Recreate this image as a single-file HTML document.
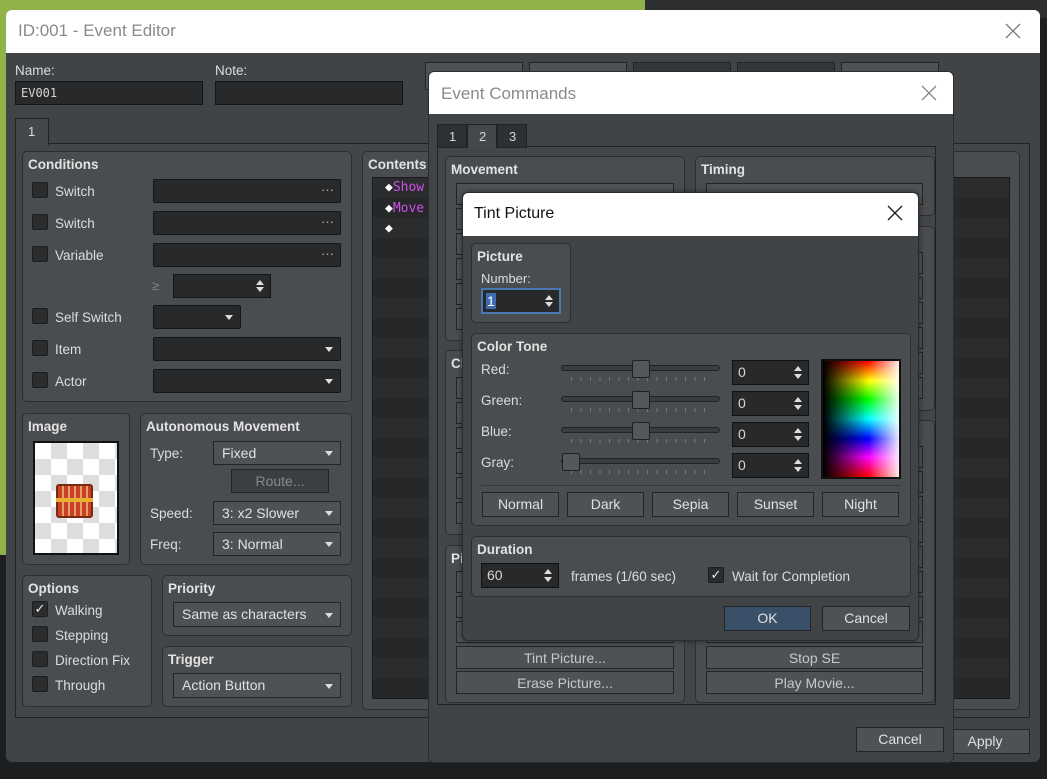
<!DOCTYPE html>
<html><head><meta charset="utf-8"><style>
*{box-sizing:border-box;margin:0;padding:0}
body{width:1047px;height:779px;overflow:hidden;position:relative;background:#1d1e1f;font-family:"Liberation Sans","DejaVu Sans",sans-serif;font-size:13px;color:#d6d6d6}
div,span,svg{position:absolute}
.grp{background:#4a4d50;border:1px solid #2c2e30;border-radius:5px}
.h{font-weight:bold;color:#e2e2e2;font-size:13.5px}
.in{background:#27292b;border:1px solid #141516}
.btn{background:#4f5255;border:1px solid #232425;text-align:center;color:#e0e0e0;line-height:22px;font-size:14px}
.cb{width:16px;height:16px;background:#2a2c2e;border:1px solid #1c1d1e;border-radius:2px}
.dd:after{content:"";position:absolute;right:7px;top:50%;margin-top:-2px;border:4px solid transparent;border-top:5px solid #ddd;border-bottom:0}
.sp:before{content:"";position:absolute;right:6px;top:5px;border:4px solid transparent;border-bottom:5px solid #ddd;border-top:0}
.sp:after{content:"";position:absolute;right:6px;bottom:5px;border:4px solid transparent;border-top:5px solid #ddd;border-bottom:0}
.lbl{font-size:13.5px;color:#dcdcdc}
.title{background:#fff;color:#8a8a8a;font-size:17px}
.trk{height:6px;background:#3a3d40;border:1px solid #222;border-radius:3px}
.thumb{width:18px;height:18px;background:#55585b;border:1px solid #1e1f20;border-radius:2px}
.ticks{height:4px;background:repeating-linear-gradient(90deg,#777 0 1px,transparent 1px 9.5px)}
</style></head><body>
<!-- backdrop -->
<div style="left:0;top:0;width:645px;height:18px;background:#8fb24a"></div>
<div style="left:0;top:0;width:8px;height:555px;background:#8fb24a"></div>
<div style="left:645px;top:0;width:402px;height:18px;background:#2c2e30"></div>

<!-- Event Editor -->
<div style="left:6px;top:10px;width:1034px;height:752px;background:#414447;border-radius:6px;overflow:hidden">
  <div class="title" style="left:0;top:0;width:1034px;height:43px;padding:11px 12px;color:#8a8a8a">ID:001 - Event Editor</div>
  <svg style="left:999px;top:13px" width="16" height="16"><path d="M1 1L15 15M15 1L1 15" stroke="#777" stroke-width="1.3"/></svg>
</div>
<div class="lbl" style="left:15px;top:63px">Name:</div>
<div class="lbl" style="left:215px;top:63px">Note:</div>
<div class="in" style="left:15px;top:81px;width:188px;height:24px;padding:4px 5px;font-family:'DejaVu Sans Mono',monospace;font-size:12px">EV001</div>
<div class="in" style="left:215px;top:81px;width:188px;height:24px"></div>
<div class="btn" style="left:425px;top:62px;width:98px;height:28px"></div>
<div class="btn" style="left:529px;top:62px;width:98px;height:28px"></div>
<div class="btn" style="left:633px;top:62px;width:98px;height:28px;background:#34373a"></div>
<div class="btn" style="left:737px;top:62px;width:98px;height:28px;background:#34373a"></div>
<div class="btn" style="left:841px;top:62px;width:98px;height:28px"></div>
<div style="left:15px;top:143px;width:1015px;height:575px;border:1px solid #222;background:#434649"></div>
<div style="left:15px;top:118px;width:34px;height:27px;background:#45484b;border:1px solid #222;border-bottom:none;color:#ddd;padding:5px 12px">1</div>

<!-- Conditions -->
<div class="grp" style="left:22px;top:151px;width:330px;height:251px"></div>
<div class="h" style="left:28px;top:157px">Conditions</div>
<div class="cb" style="left:32px;top:182px"></div><div class="lbl" style="left:55px;top:184px">Switch</div>
<div class="in" style="left:153px;top:179px;width:188px;height:24px;border-radius:2px"><span style="right:6px;top:2px;color:#bbb">···</span></div>
<div class="cb" style="left:32px;top:214px"></div><div class="lbl" style="left:55px;top:216px">Switch</div>
<div class="in" style="left:153px;top:211px;width:188px;height:24px;border-radius:2px"><span style="right:6px;top:2px;color:#bbb">···</span></div>
<div class="cb" style="left:32px;top:246px"></div><div class="lbl" style="left:55px;top:248px">Variable</div>
<div class="in" style="left:153px;top:243px;width:188px;height:24px;border-radius:2px"><span style="right:6px;top:2px;color:#bbb">···</span></div>
<div style="left:152px;top:278px;color:#888">≥</div>
<div class="in sp" style="left:173px;top:274px;width:98px;height:24px"></div>
<div class="cb" style="left:32px;top:308px"></div><div class="lbl" style="left:55px;top:310px">Self Switch</div>
<div class="in dd" style="left:153px;top:305px;width:88px;height:24px;border-radius:2px"></div>
<div class="cb" style="left:32px;top:340px"></div><div class="lbl" style="left:55px;top:342px">Item</div>
<div class="in dd" style="left:153px;top:337px;width:188px;height:24px;border-radius:2px"></div>
<div class="cb" style="left:32px;top:372px"></div><div class="lbl" style="left:55px;top:374px">Actor</div>
<div class="in dd" style="left:153px;top:369px;width:188px;height:24px;border-radius:2px"></div>

<!-- Image -->
<div class="grp" style="left:22px;top:413px;width:108px;height:152px"></div>
<div class="h" style="left:28px;top:419px">Image</div>
<div style="left:33px;top:441px;width:86px;height:114px;border:2px solid #111;background-color:#fff;background-image:linear-gradient(45deg,#ddd 25%,transparent 25%,transparent 75%,#ddd 75%),linear-gradient(45deg,#ddd 25%,transparent 25%,transparent 75%,#ddd 75%);background-size:32px 32px;background-position:0 0,16px 16px"></div>
<div style="left:56px;top:484px;width:37px;height:34px;background:repeating-linear-gradient(90deg,#c8402a 0 4px,#e8a060 4px 6px);border:2px solid #7a2a10;border-radius:3px"></div>
<div style="left:56px;top:498px;width:37px;height:4px;background:#e8b030"></div>

<!-- Autonomous -->
<div class="grp" style="left:140px;top:413px;width:212px;height:152px"></div>
<div class="h" style="left:146px;top:419px">Autonomous Movement</div>
<div class="lbl" style="left:150px;top:446px">Type:</div>
<div class="btn dd" style="left:213px;top:441px;width:128px;height:24px;text-align:left;padding-left:8px;line-height:22px">Fixed</div>
<div class="btn" style="left:231px;top:469px;width:98px;height:24px;color:#888;background:#3c3f42">Route...</div>
<div class="lbl" style="left:150px;top:506px">Speed:</div>
<div class="btn dd" style="left:213px;top:501px;width:128px;height:24px;text-align:left;padding-left:8px">3: x2 Slower</div>
<div class="lbl" style="left:150px;top:537px">Freq:</div>
<div class="btn dd" style="left:213px;top:532px;width:128px;height:24px;text-align:left;padding-left:8px">3: Normal</div>

<!-- Options -->
<div class="grp" style="left:22px;top:575px;width:130px;height:132px"></div>
<div class="h" style="left:28px;top:581px">Options</div>
<div class="cb" style="left:32px;top:601px;color:#eee;font-size:13px;line-height:14px;text-align:center">✓</div><div class="lbl" style="left:55px;top:603px">Walking</div>
<div class="cb" style="left:32px;top:626px"></div><div class="lbl" style="left:55px;top:628px">Stepping</div>
<div class="cb" style="left:32px;top:651px"></div><div class="lbl" style="left:55px;top:653px">Direction Fix</div>
<div class="cb" style="left:32px;top:676px"></div><div class="lbl" style="left:55px;top:678px">Through</div>
<div class="grp" style="left:162px;top:575px;width:190px;height:61px"></div>
<div class="h" style="left:168px;top:581px">Priority</div>
<div class="btn dd" style="left:173px;top:602px;width:168px;height:25px;text-align:left;padding-left:8px">Same as characters</div>
<div class="grp" style="left:162px;top:646px;width:190px;height:61px"></div>
<div class="h" style="left:168px;top:652px">Trigger</div>
<div class="btn dd" style="left:173px;top:673px;width:168px;height:25px;text-align:left;padding-left:8px">Action Button</div>

<!-- Contents -->
<div class="grp" style="left:362px;top:151px;width:658px;height:559px"></div>
<div class="h" style="left:368px;top:157px">Contents</div>
<div style="left:372px;top:177px;width:638px;height:522px;background:repeating-linear-gradient(180deg,#2a2c2e 0 20px,#252729 20px 40px);border:1px solid #1a1a1a"></div>
<div style="left:385px;top:180px;color:#fff;font-family:'DejaVu Sans Mono',monospace;font-size:13px">◆<span style="position:static;color:#d050e8">Show</span></div>
<div style="left:385px;top:201px;color:#fff;font-family:'DejaVu Sans Mono',monospace;font-size:13px">◆<span style="position:static;color:#d050e8">Move</span></div>
<div style="left:385px;top:221px;color:#fff;font-family:'DejaVu Sans Mono',monospace;font-size:13px">◆</div>

<div class="btn" style="left:940px;top:729px;width:90px;height:25px">Apply</div>

<!-- Event Commands -->
<div style="left:428px;top:71px;width:526px;height:692px;background:#414447;border:1px solid #2a2c2e;border-radius:6px;overflow:hidden">
  <div class="title" style="left:0;top:0;width:526px;height:42px;padding:12px 12px">Event Commands</div>
  <svg style="left:492px;top:13px" width="16" height="16"><path d="M1 1L15 15M15 1L1 15" stroke="#888" stroke-width="1.3"/></svg>
</div>
<div style="left:437px;top:146px;width:499px;height:559px;border:1px solid #222;background:#434649"></div>
<div style="left:437px;top:124px;width:30px;height:24px;background:#2e3133;border:1px solid #222;padding:4px 11px">1</div>
<div style="left:467px;top:124px;width:30px;height:24px;background:#45484b;border:1px solid #222;border-bottom:none;padding:4px 11px">2</div>
<div style="left:497px;top:124px;width:30px;height:24px;background:#2e3133;border:1px solid #222;padding:4px 11px">3</div>
<div class="grp" style="left:445px;top:156px;width:240px;height:185px"></div>
<div class="h" style="left:451px;top:162px">Movement</div>
<div class="btn" style="left:456px;top:183px;width:218px;height:22px"></div>
<div class="btn" style="left:456px;top:208px;width:218px;height:22px"></div>
<div class="btn" style="left:456px;top:233px;width:218px;height:22px"></div>
<div class="btn" style="left:456px;top:258px;width:218px;height:22px"></div>
<div class="btn" style="left:456px;top:283px;width:218px;height:22px"></div>
<div class="btn" style="left:456px;top:308px;width:218px;height:22px"></div>
<div class="grp" style="left:445px;top:350px;width:240px;height:185px"></div>
<div class="h" style="left:451px;top:356px">Cl</div>
<div class="btn" style="left:456px;top:377px;width:218px;height:22px"></div>
<div class="btn" style="left:456px;top:402px;width:218px;height:22px"></div>
<div class="btn" style="left:456px;top:427px;width:218px;height:22px"></div>
<div class="btn" style="left:456px;top:452px;width:218px;height:22px"></div>
<div class="btn" style="left:456px;top:477px;width:218px;height:22px"></div>
<div class="btn" style="left:456px;top:502px;width:218px;height:22px"></div>
<div class="grp" style="left:445px;top:545px;width:240px;height:158px"></div>
<div class="h" style="left:451px;top:551px">Pi</div>
<div class="btn" style="left:456px;top:571px;width:218px;height:22px"></div>
<div class="btn" style="left:456px;top:596px;width:218px;height:22px"></div>
<div class="btn" style="left:456px;top:621px;width:218px;height:22px"></div>
<div class="btn" style="left:456px;top:646px;width:218px;height:23px;color:#c8c8c8">Tint Picture...</div>
<div class="btn" style="left:456px;top:671px;width:218px;height:23px;color:#c8c8c8">Erase Picture...</div>
<div class="grp" style="left:695px;top:156px;width:240px;height:60px"></div>
<div class="h" style="left:701px;top:162px">Timing</div>
<div class="btn" style="left:706px;top:183px;width:217px;height:22px"></div>
<div class="grp" style="left:695px;top:226px;width:240px;height:185px"></div>
<div class="btn" style="left:706px;top:252px;width:217px;height:22px"></div>
<div class="btn" style="left:706px;top:277px;width:217px;height:22px"></div>
<div class="btn" style="left:706px;top:302px;width:217px;height:22px"></div>
<div class="btn" style="left:706px;top:327px;width:217px;height:22px"></div>
<div class="btn" style="left:706px;top:352px;width:217px;height:22px"></div>
<div class="btn" style="left:706px;top:377px;width:217px;height:22px"></div>
<div class="grp" style="left:695px;top:420px;width:240px;height:283px"></div>
<div class="btn" style="left:706px;top:446px;width:217px;height:22px"></div>
<div class="btn" style="left:706px;top:471px;width:217px;height:22px"></div>
<div class="btn" style="left:706px;top:496px;width:217px;height:22px"></div>
<div class="btn" style="left:706px;top:521px;width:217px;height:22px"></div>
<div class="btn" style="left:706px;top:546px;width:217px;height:22px"></div>
<div class="btn" style="left:706px;top:571px;width:217px;height:22px"></div>
<div class="btn" style="left:706px;top:596px;width:217px;height:22px"></div>
<div class="btn" style="left:706px;top:621px;width:217px;height:22px"></div>
<div class="btn" style="left:706px;top:646px;width:217px;height:23px;color:#c8c8c8">Stop SE</div>
<div class="btn" style="left:706px;top:671px;width:217px;height:23px;color:#c8c8c8">Play Movie...</div>
<div class="btn" style="left:856px;top:727px;width:88px;height:25px">Cancel</div>

<!-- Tint Picture -->
<div style="left:462px;top:192px;width:457px;height:449px;background:#414447;border:1px solid #2a2c2e;border-radius:6px;overflow:hidden;box-shadow:0 0 6px rgba(0,0,0,.5)">
  <div class="title" style="left:0;top:0;width:457px;height:43px;padding:12px 11px;color:#111;font-size:16px">Tint Picture</div>
  <svg style="left:424px;top:12px" width="16" height="16"><path d="M1 1L15 15M15 1L1 15" stroke="#222" stroke-width="1.4"/></svg>
</div>
<div class="grp" style="left:471px;top:243px;width:100px;height:80px"></div>
<div class="h" style="left:477px;top:249px">Picture</div>
<div class="lbl" style="left:481px;top:271px;font-size:13px">Number:</div>
<div class="in sp" style="left:481px;top:288px;width:80px;height:26px;border:2px solid #4b78b0"><span style="left:3px;top:3px;background:#3f6cb0;color:#fff;padding:0 1px;font-size:14px">1</span></div>

<div class="grp" style="left:471px;top:333px;width:440px;height:193px"></div>
<div class="h" style="left:477px;top:339px">Color Tone</div>
<div class="lbl" style="left:481px;top:362px">Red:</div>
<div class="lbl" style="left:481px;top:393px">Green:</div>
<div class="lbl" style="left:481px;top:424px">Blue:</div>
<div class="lbl" style="left:481px;top:455px">Gray:</div>
<div class="trk" style="left:561px;top:365px;width:159px"></div><div class="ticks" style="left:571px;top:377px;width:140px"></div><div class="thumb" style="left:632px;top:360px"></div>
<div class="trk" style="left:561px;top:396px;width:159px"></div><div class="ticks" style="left:571px;top:408px;width:140px"></div><div class="thumb" style="left:632px;top:391px"></div>
<div class="trk" style="left:561px;top:427px;width:159px"></div><div class="ticks" style="left:571px;top:439px;width:140px"></div><div class="thumb" style="left:632px;top:422px"></div>
<div class="trk" style="left:561px;top:458px;width:159px"></div><div class="ticks" style="left:571px;top:470px;width:140px"></div><div class="thumb" style="left:562px;top:453px"></div>
<div class="in sp" style="left:732px;top:360px;width:77px;height:25px;padding:3px 5px;font-size:14px;border-color:#111">0</div>
<div class="in sp" style="left:732px;top:391px;width:77px;height:25px;padding:3px 5px;font-size:14px;border-color:#111">0</div>
<div class="in sp" style="left:732px;top:422px;width:77px;height:25px;padding:3px 5px;font-size:14px;border-color:#111">0</div>
<div class="in sp" style="left:732px;top:453px;width:77px;height:25px;padding:3px 5px;font-size:14px;border-color:#111">0</div>
<div style="left:821px;top:359px;width:80px;height:120px;border:2px solid #111;background:linear-gradient(90deg,#000,rgba(0,0,0,0) 60%,rgba(255,255,255,.9)),linear-gradient(180deg,#f00,#ff0 17%,#0f0 33%,#0ff 50%,#00f 67%,#f0f 83%,#f00)"></div>
<div style="left:481px;top:485px;width:420px;height:1px;background:#35383a"></div>
<div class="btn" style="left:482px;top:492px;width:77px;height:25px">Normal</div>
<div class="btn" style="left:567px;top:492px;width:77px;height:25px">Dark</div>
<div class="btn" style="left:652px;top:492px;width:77px;height:25px">Sepia</div>
<div class="btn" style="left:737px;top:492px;width:77px;height:25px">Sunset</div>
<div class="btn" style="left:822px;top:492px;width:77px;height:25px">Night</div>

<div class="grp" style="left:471px;top:536px;width:440px;height:61px"></div>
<div class="h" style="left:477px;top:542px">Duration</div>
<div class="in sp" style="left:481px;top:563px;width:78px;height:25px;padding:3px 5px;font-size:14px;border-color:#111">60</div>
<div class="lbl" style="left:571px;top:569px">frames (1/60 sec)</div>
<div class="cb" style="left:708px;top:567px;color:#eee;text-align:center;line-height:14px">✓</div>
<div class="lbl" style="left:732px;top:569px">Wait for Completion</div>
<div class="btn" style="left:724px;top:606px;width:87px;height:25px;background:#3a5068">OK</div>
<div class="btn" style="left:822px;top:606px;width:88px;height:25px">Cancel</div>
</body></html>
